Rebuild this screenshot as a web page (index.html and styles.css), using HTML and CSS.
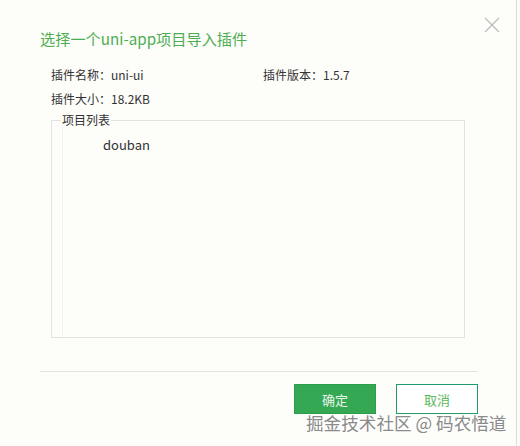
FILE: index.html
```html
<!DOCTYPE html>
<html lang="zh-CN">
<head>
    <meta charset="UTF-8">
    <title>导入插件</title>
    <link rel="stylesheet" href="styles.css">
</head>
<body>
    <div class="dialog">
        <span class="close">
            <svg width="16" height="16" viewBox="0 0 16 16">
                <path d="M1 1 L15 15 M15 1 L1 15" stroke="#b8b8b8" stroke-width="1.1" fill="none"/>
            </svg>
        </span>
        <h1 class="title">选择一个uni-app项目导入插件</h1>
        <div class="info">
            <div class="info-row">
                <span class="info-cell">插件名称：uni-ui</span>
                <span class="info-cell">插件版本：1.5.7</span>
            </div>
            <div class="info-row">
                <span class="info-cell">插件大小：18.2KB</span>
            </div>
        </div>
        <fieldset class="projects">
            <legend>项目列表</legend>
            <ul class="project-list">
                <li>douban</li>
            </ul>
        </fieldset>
        <div class="footer">
            <button class="btn btn-ok">确定</button>
            <button class="btn btn-cancel">取消</button>
        </div>
        <div class="watermark">掘金技术社区 @ 码农悟道</div>
    </div>
</body>
</html>
```

FILE: styles.css
```css
body {
    margin: 0;
    padding: 0;
    background: #fdfdfa;
    font-family: "Noto Sans CJK SC", "Noto Sans", sans-serif;
    color: #333;
}

.dialog {
    position: relative;
    width: 517px;
    height: 446px;
    border-right: 1px solid #dcdcdc;
    box-sizing: border-box;
    padding-top: 28px;
    overflow: hidden;
}

.close {
    position: absolute;
    top: 14px;
    left: 484px;
    width: 16px;
    height: 16px;
}

.title {
    margin: 0 0 0 40px;
    font-size: 15.2px;
    line-height: 20px;
    font-weight: normal;
    color: #4cae50;
}

.info {
    margin: 15px 0 0 51px;
    font-size: 12px;
}

.info-row {
    display: flex;
    height: 24px;
    line-height: 24px;
}

.info-cell {
    width: 212px;
}

.projects {
    margin: 2px 0 0 51px;
    padding: 0 0 0 10px;
    width: 414px;
    height: 225px;
    box-sizing: border-box;
    border: 1px solid #e2e2e0;
}

.projects legend {
    padding: 0 1px;
    margin-left: -1px;
    font-size: 12px;
    line-height: 14px;
}

.project-list {
    list-style: none;
    margin: 0;
    padding: 9px 0 0 40px;
    height: 100%;
    box-sizing: border-box;
    border-left: 1px solid #f2f2ef;
    font-size: 13px;
    line-height: 18px;
}

.footer {
    margin: 33px 38px 0 40px;
    border-top: 1px solid #e3e3e0;
    padding-top: 12px;
    display: flex;
    justify-content: flex-end;
    gap: 20px;
}

.btn {
    width: 82px;
    height: 30px;
    font-family: inherit;
    font-size: 13px;
    cursor: pointer;
}

.btn-ok {
    background: #34a853;
    border: 1px solid #2f9c4b;
    color: #e9f6ec;
}

.btn-cancel {
    background: #fff;
    border: 1px solid #1f9b6c;
    color: #5cb85c;
}

.watermark {
    position: absolute;
    left: 306px;
    top: 412px;
    font-size: 17.6px;
    line-height: 22px;
    color: #8a8a8a;
    text-shadow: 1px 1px 0 #fff, -1px -1px 0 #fff;
    white-space: nowrap;
}
```
